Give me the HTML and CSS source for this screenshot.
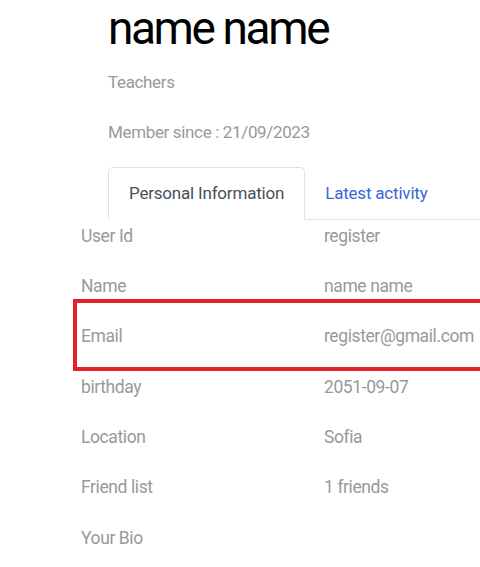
FILE: index.html
```html
<!DOCTYPE html>
<html lang="en">
<head>
<meta charset="utf-8">
<title>Profile</title>
<link rel="stylesheet" href="styles.css">
</head>
<body>
<div class="page">
  <div class="header">
    <h1 class="name">name name</h1>
    <p class="role">Teachers</p>
    <p class="since">Member since : 21/09/2023</p>
    <ul class="tabs">
      <li class="tab active">Personal Information</li>
      <li class="tab link">Latest activity</li>
    </ul>
  </div>
  <div class="info">
    <div class="row"><span class="label">User Id</span><span class="value">register</span></div>
    <div class="row"><span class="label">Name</span><span class="value">name name</span></div>
    <div class="row"><span class="label">Email</span><span class="value">register@gmail.com</span></div>
    <div class="row"><span class="label">birthday</span><span class="value">2051-09-07</span></div>
    <div class="row"><span class="label">Location</span><span class="value">Sofia</span></div>
    <div class="row"><span class="label">Friend list</span><span class="value">1 friends</span></div>
    <div class="row"><span class="label">Your Bio</span><span class="value"></span></div>
  </div>
  <div class="highlight"></div>
</div>
</body>
</html>
```

FILE: styles.css
```css
html, body {
  margin: 0;
  padding: 0;
  overflow: hidden;
  background: #ffffff;
}
body {
  font-family: Roboto, "Liberation Sans", sans-serif;
  font-size: 17px;
  letter-spacing: -0.35px;
  color: #999999;
}
.page {
  position: relative;
  width: 480px;
  height: 567px;
  overflow: hidden;
  padding-left: 81px;
  box-sizing: border-box;
}
.header {
  margin-left: 27px;
}
.name {
  margin: 0;
  font-size: 46px;
  line-height: 56px;
  font-weight: 400;
  letter-spacing: -2.4px;
  color: #000000;
}
.role, .since {
  margin: 0;
  line-height: 24px;
}
.role {
  margin-top: 14px;
}
.since {
  margin-top: 25.5px;
}
.tabs {
  list-style: none;
  margin: 23.3px 0 0 0;
  padding: 0;
  display: flex;
  border-bottom: 1px solid #dee2e6;
}
.tab {
  line-height: 24px;
  padding: 13px 20px 14px 20px;
  border: 1px solid transparent;
  margin-bottom: -1px;
  border-radius: 5px 5px 0 0;
  letter-spacing: -0.2px;
}
.tab.active {
  color: #495057;
  background: #ffffff;
  border-color: #dee2e6 #dee2e6 #ffffff;
}
.tab.link {
  padding-left: 19px;
  color: #3b66d6;
}
.info {
  display: flex;
  flex-direction: column;
}
.row {
  display: grid;
  grid-template-columns: 243px 1fr;
  font-size: 17.5px;
  letter-spacing: -0.4px;
  line-height: 24px;
  padding: 4px 0 22.33px 0;
}
.highlight {
  position: absolute;
  left: 73px;
  top: 299px;
  width: 440px;
  height: 72px;
  box-sizing: border-box;
  border: 4px solid #e3212b;
}
```
